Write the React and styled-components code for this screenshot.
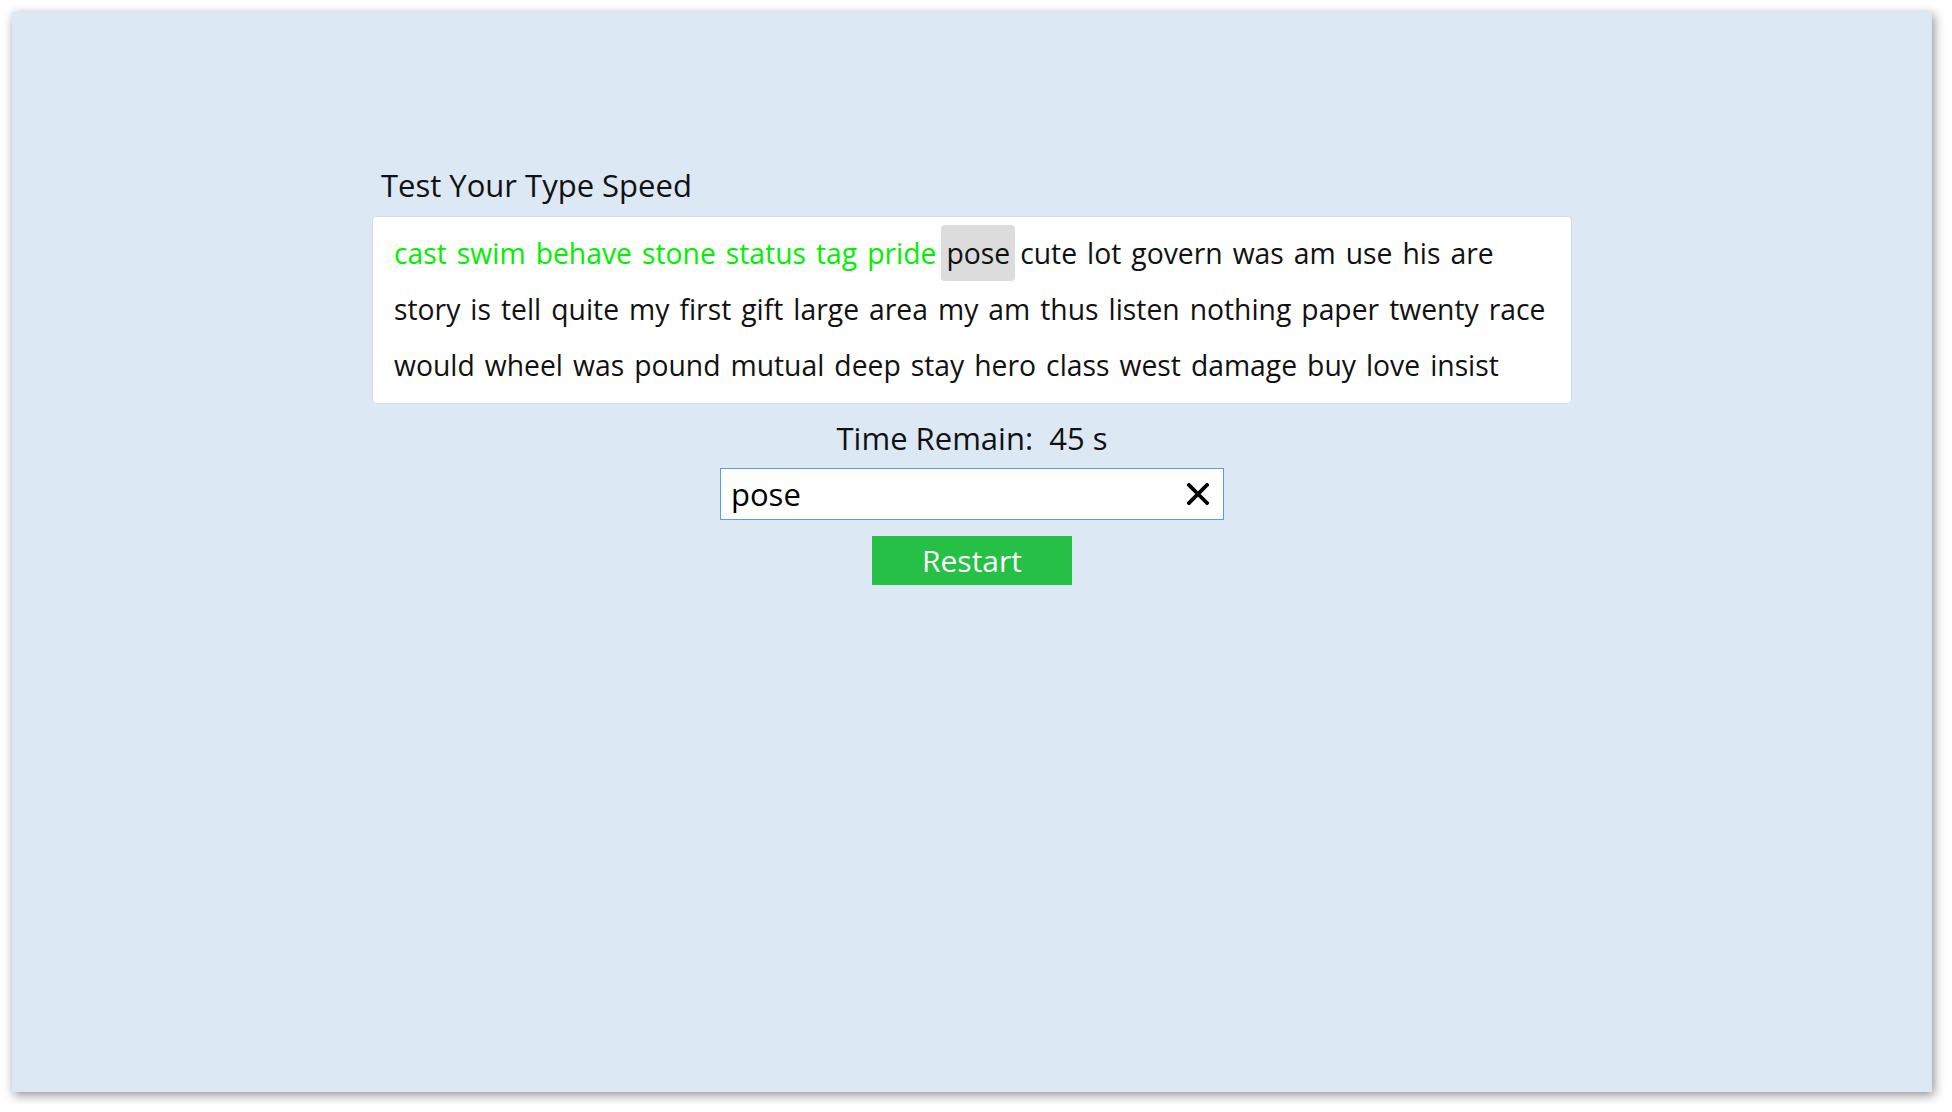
import React from "react";
import styled, { createGlobalStyle } from "styled-components";

const GlobalStyle = createGlobalStyle`
  html, body {
    margin: 0;
    padding: 0;
    background: #ffffff;
  }
  body {
    font-family: "Open Sans", "Noto Sans", sans-serif;
  }
`;

const words = [
  "cast", "swim", "behave", "stone", "status", "tag", "pride", "pose", "cute",
  "lot", "govern", "was", "am", "use", "his", "are", "story", "is", "tell",
  "quite", "my", "first", "gift", "large", "area", "my", "am", "thus",
  "listen", "nothing", "paper", "twenty", "race", "would", "wheel", "was",
  "pound", "mutual", "deep", "stay", "hero", "class", "west", "damage", "buy",
  "love", "insist",
];
const currentIndex = 7;

const Window = styled.div`
  margin: 12px;
  width: 1920px;
  height: 1080px;
  background: #dce9f5;
  box-shadow: 2px 3px 10px rgba(0, 0, 0, 0.45);
  display: flex;
  flex-direction: column;
  align-items: center;
  padding-top: 152px;
  box-sizing: border-box;
`;

const Panel = styled.div`
  width: 1200px;
  display: flex;
  flex-direction: column;
`;

const Title = styled.h1`
  margin: 0 0 10px 9px;
  font-size: 31px;
  font-weight: 400;
  line-height: 42px;
  color: #111;
`;

const Card = styled.div`
  background: #fff;
  border: 1px solid #cfdbe7;
  border-radius: 4px;
  padding: 8px 16px 10px;
  display: flex;
  flex-wrap: wrap;
`;

const Word = styled.span`
  padding: 0 5px;
  height: 56px;
  line-height: 56px;
  font-size: 28.3px;
  border-radius: 4px;
  color: ${({ $state }) => ($state === "done" ? "#00f000" : "#111")};
  background: ${({ $state }) => ($state === "current" ? "#dcdcdc" : "transparent")};
`;

const Controls = styled.div`
  display: flex;
  flex-direction: column;
  align-items: center;
  margin-top: 13px;
`;

const Timer = styled.div`
  font-size: 31px;
  line-height: 42px;
  color: #111;
  white-space: pre;
`;

const InputBox = styled.div`
  margin-top: 9px;
  width: 504px;
  height: 52px;
  box-sizing: border-box;
  border: 1px solid #5a9be6;
  background: #fff;
  display: flex;
  align-items: center;
  padding: 0 14px 0 10px;
`;

const TypedText = styled.span`
  flex: 1;
  font-size: 31px;
  color: #000;
`;

const ClearButton = styled.button`
  border: none;
  background: none;
  padding: 0;
  display: flex;
  cursor: pointer;
`;

const RestartButton = styled.button`
  margin-top: 16px;
  width: 200px;
  height: 49px;
  border: none;
  background: #25c045;
  color: #fff;
  font-family: inherit;
  font-size: 30px;
  cursor: pointer;
`;

const App = () => {
  return (
    <>
      <GlobalStyle />
      <Window>
        <Panel>
          <Title>Test Your Type Speed</Title>
          <Card>
            {words.map((word, index) => (
              <Word
                key={index}
                $state={
                  index < currentIndex
                    ? "done"
                    : index === currentIndex
                    ? "current"
                    : "pending"
                }
              >
                {word}
              </Word>
            ))}
          </Card>
        </Panel>
        <Controls>
          <Timer>Time Remain:  45 s</Timer>
          <InputBox>
            <TypedText>pose</TypedText>
            <ClearButton aria-label="clear">
              <svg width="22" height="22" viewBox="0 0 22 22">
                <path
                  d="M2 2 L20 20 M20 2 L2 20"
                  stroke="#000"
                  strokeWidth="3.8"
                  strokeLinecap="square"
                />
              </svg>
            </ClearButton>
          </InputBox>
          <RestartButton>Restart</RestartButton>
        </Controls>
      </Window>
    </>
  );
};

export default App;
